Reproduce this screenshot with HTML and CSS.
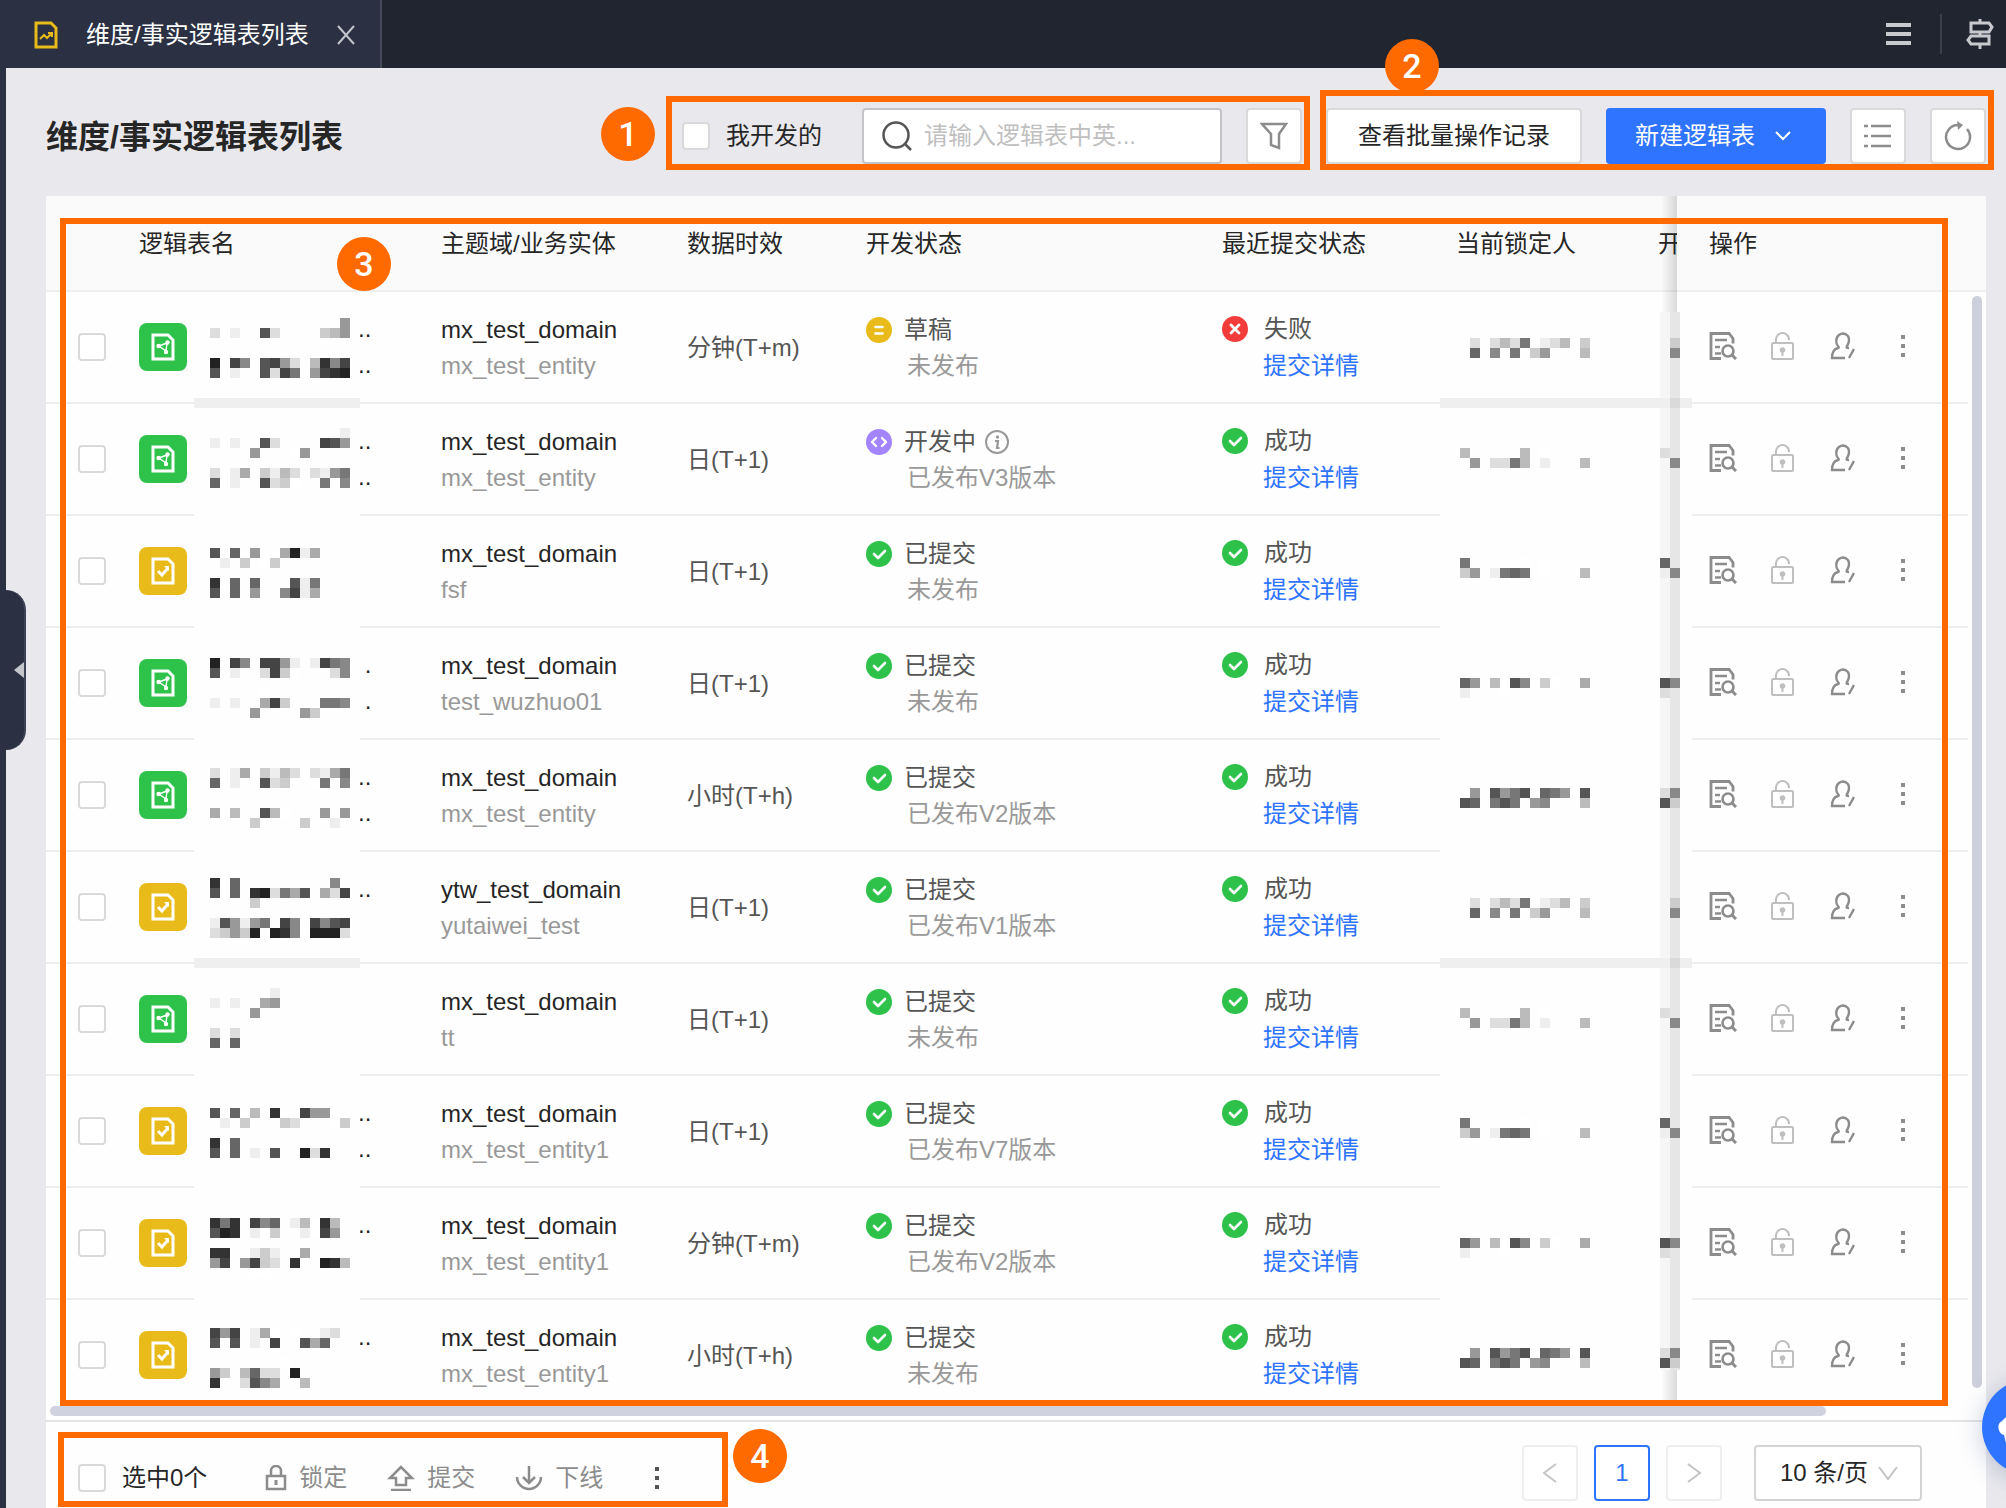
FILE: index.html
```
<!DOCTYPE html>
<html lang="zh-CN">
<head>
  <meta charset="UTF-8" />
  <title>维度/事实逻辑表列表</title>
  <link rel="stylesheet" href="styles.css">
</head>
<body>
  <!-- shared icons -->
  <svg class="sprite" aria-hidden="true">
    <symbol id="i-graph" viewBox="0 0 24 28">
      <path d="M2 2h15l5 5v19H2z" fill="none" stroke="currentColor" stroke-width="3" />
      <path d="M8 13l8-3-1 8z" fill="none" stroke="currentColor" stroke-width="1.500" />
      <circle cx="7.500" cy="13" r="2.200" fill="currentColor" /><circle cx="16.500" cy="9.500" r="2.200" fill="currentColor" /><circle cx="15" cy="19" r="2.200" fill="currentColor" />
    </symbol>
    <symbol id="i-chart" viewBox="0 0 24 28">
      <path d="M2 2h15l5 5v19H2z" fill="none" stroke="currentColor" stroke-width="3" />
      <path d="M7 14l4 4 6-7" fill="none" stroke="currentColor" stroke-width="3" />
      <path d="M13 9h5v5z" fill="currentColor" />
    </symbol>
    <symbol id="i-ok" viewBox="0 0 26 26">
      <circle cx="13" cy="13" r="13" fill="#2fc24b" />
      <path d="M8 13l4 4 7-7" fill="none" stroke="#fff" stroke-width="2.6" stroke-linecap="round" stroke-linejoin="round" />
    </symbol>
    <symbol id="i-fail" viewBox="0 0 26 26">
      <circle cx="13" cy="13" r="13" fill="#f23c3c" />
      <path d="M9 9l8 8M17 9l-8 8" stroke="#fff" stroke-width="2.8" stroke-linecap="round" />
    </symbol>
    <symbol id="i-draft" viewBox="0 0 26 26">
      <circle cx="13" cy="13" r="13" fill="#e8bb1a" />
      <path d="M9.500 10h7M9.500 16.500h7" stroke="#fff" stroke-width="2.6" stroke-linecap="round" />
    </symbol>
    <symbol id="i-dev" viewBox="0 0 26 26">
      <circle cx="13" cy="13" r="13" fill="#a285ff" />
      <path d="M10 9l-4 4 4 4M16 9l4 4-4 4" fill="none" stroke="#fff" stroke-width="2.4" stroke-linecap="round" stroke-linejoin="round" />
    </symbol>
    <symbol id="i-info" viewBox="0 0 26 26">
      <circle cx="13" cy="13" r="11" fill="none" stroke="currentColor" stroke-width="2" />
      <circle cx="13.500" cy="8" r="1.700" fill="currentColor" />
      <path d="M11 12h3l-1 7h2.500" fill="none" stroke="currentColor" stroke-width="2.200" />
    </symbol>
    <symbol id="i-detail" viewBox="0 0 28 28">
      <path d="M12 26.500H2v-25h18l4 5v5" fill="none" stroke="currentColor" stroke-width="2.800" />
      <path d="M6 8h12M6 15h5M6 21.500h6" stroke="currentColor" stroke-width="2.600" />
      <circle cx="19" cy="19" r="5.500" fill="none" stroke="currentColor" stroke-width="2.600" />
      <path d="M23 23l4 4" stroke="currentColor" stroke-width="3" />
    </symbol>
    <symbol id="i-unlock" viewBox="0 0 28 30">
      <rect x="3" y="12" width="21" height="16" rx="1" fill="none" stroke="currentColor" stroke-width="2" />
      <path d="M7 12V8a6.500 6.500 0 0 1 13 1" fill="none" stroke="currentColor" stroke-width="2" />
      <circle cx="13.500" cy="19" r="2.800" fill="currentColor" /><path d="M13.500 19v6" stroke="currentColor" stroke-width="2" />
    </symbol>
    <symbol id="i-user" viewBox="0 0 28 28">
      <path d="M16 26H3c0-5 2-9 6-10 1 0 1-1 0-2-2-2-3-8 1-11s10-1 10 5c0 3-1 4-2 6s0 2 2 2" fill="none" stroke="currentColor" stroke-width="2.400" />
      <path d="M25 17l-5 9" stroke="currentColor" stroke-width="2.400" />
    </symbol>
    <symbol id="i-more" viewBox="0 0 28 28">
      <path d="M12 3h4v4h-4zM12 12h4v4h-4zM12 21h4v4h-4z" fill="currentColor" />
    </symbol>
  </svg>

  <header class="topbar">
    <div class="tab">
      <svg class="tab-icon" viewBox="0 0 24 28">
        <path d="M2 2h15l5 5v19H2z" fill="none" stroke="#e8bb1a" stroke-width="3" />
        <path d="M6 18l4-4 3 3 5-5M14 12h4v4" fill="none" stroke="#e8bb1a" stroke-width="2" />
      </svg>
      <span>维度/事实逻辑表列表</span>
      <button class="tab-close" aria-label="关闭">
        <svg width="18" height="20" viewBox="0 0 18 20"><path d="M1 1l16 18M17 1L1 19" stroke="#c4c6cc" stroke-width="2" /></svg>
      </button>
    </div>
    <div class="topbar-tools">
      <button aria-label="菜单">
        <svg width="26" height="22" viewBox="0 0 26 22"><path d="M0 2h25M0 11h25M0 20h25" stroke="#c8c9cd" stroke-width="4" /></svg>
      </button>
      <span class="divider"></span>
      <button aria-label="导航">
        <svg width="28" height="30" viewBox="0 0 28 30"><path d="M14 0v4M5 4h18l3 4-3 5H5zM14 13v4M23 17H5l-3 4 3 4h18zM14 25v5" fill="none" stroke="#c8c9cd" stroke-width="3" /></svg>
      </button>
    </div>
  </header>

  <main>
    <button class="side-handle" aria-label="展开侧栏"></button>

    <div class="toolbar">
      <h1>维度/事实逻辑表列表</h1>

      <div class="filters">
        <label class="mine"><input type="checkbox" /> 我开发的</label>
        <label class="search">
          <svg width="30" height="32" viewBox="0 0 30 32"><circle cx="14" cy="15" r="12.500" fill="none" stroke="#555" stroke-width="2.500" /><path d="M23 24l6 6" stroke="#555" stroke-width="2.500" /></svg>
          <input type="text" placeholder="请输入逻辑表中英..." aria-label="搜索逻辑表" />
        </label>
        <button class="btn icon-btn" aria-label="筛选">
          <svg width="28" height="28" viewBox="0 0 28 28"><path d="M2 2h24l-7 10v14l-8-3V12z" fill="none" stroke="#8c8c8c" stroke-width="2.500" /></svg>
        </button>
        <div class="mark mark-filter"><span class="badge">1</span></div>
      </div>

      <div class="actions">
        <button class="btn">查看批量操作记录</button>
        <button class="btn primary">新建逻辑表
          <svg width="16" height="10" viewBox="0 0 16 10"><path d="M1 1l7 7 7-7" fill="none" stroke="#fff" stroke-width="2" /></svg>
        </button>
        <button class="btn icon-btn" aria-label="列表">
          <svg width="28" height="24" viewBox="0 0 28 24"><path d="M7 2h20M7 12h20M7 22h20M0 2h4M0 12h4M0 22h4" stroke="#8c8c8c" stroke-width="2.500" /></svg>
        </button>
        <button class="btn icon-btn" aria-label="刷新">
          <svg width="28" height="30" viewBox="0 0 28 30"><path d="M23 8a12 12 0 1 1-9-4h2" fill="none" stroke="#8c8c8c" stroke-width="2.500" /><path d="M13 0l6 4-5 5z" fill="#8c8c8c" /></svg>
        </button>
        <div class="mark mark-actions"><span class="badge">2</span></div>
      </div>
    </div>

    <section class="panel">
      <div class="table-wrap">
        <table>
          <colgroup>
            <col class="c-check"><col class="c-name"><col class="c-domain"><col class="c-time"><col>
            <col class="c-submit"><col class="c-locker"><col class="c-owner"><col class="c-ops">
          </colgroup>
          <thead>
            <tr>
              <th></th><th>逻辑表名</th><th>主题域/业务实体</th><th>数据时效</th><th>开发状态</th>
              <th>最近提交状态</th><th>当前锁定人</th><th class="clip">开</th><th class="ops">操作</th>
            </tr>
          </thead>
          <tbody id="rows"></tbody>
        </table>
        <div class="gutter"><div class="gutter-head"></div><div class="v-bar"></div></div>
        <div class="mark mark-table"><span class="badge">3</span></div>
      </div>
      <div class="h-track"><div class="h-bar"></div></div>

      <footer>
        <div class="bulk">
          <label class="picked"><input type="checkbox" /> 选中0个</label>
          <button><svg width="22" height="26" viewBox="0 0 22 26"><path d="M2 11h18v13H2zM6 11V6a5 5 0 0 1 10 0v5" fill="none" stroke="currentColor" stroke-width="2.500" /><path d="M11 15v5" stroke="currentColor" stroke-width="3" /></svg>锁定</button>
          <button><svg width="28" height="26" viewBox="0 0 28 26"><path d="M14 2L3 13h6v7h10v-7h6zM4 25h20" fill="none" stroke="currentColor" stroke-width="2.500" /></svg>提交</button>
          <button><svg width="28" height="26" viewBox="0 0 28 26"><path d="M14 1v16M8 12l6 6 6-6" fill="none" stroke="currentColor" stroke-width="2.500" /><path d="M2 12a12 12 0 0 0 24 0" fill="none" stroke="currentColor" stroke-width="2.500" /></svg>下线</button>
          <button class="bulk-more" aria-label="更多"><svg width="28" height="28"><use href="#i-more" /></svg></button>
          <div class="mark mark-bulk"><span class="badge">4</span></div>
        </div>
        <nav class="pager">
          <button disabled aria-label="上一页"><svg width="14" height="20" viewBox="0 0 14 20"><path d="M13 1L1 10l12 9" fill="none" stroke="#c4c4c4" stroke-width="2" /></svg></button>
          <button class="current">1</button>
          <button disabled aria-label="下一页"><svg width="14" height="20" viewBox="0 0 14 20"><path d="M1 1l12 9-12 9" fill="none" stroke="#c4c4c4" stroke-width="2" /></svg></button>
          <div class="page-size">
            <select aria-label="每页条数"><option>10 条/页</option></select>
            <svg width="20" height="14" viewBox="0 0 20 14"><path d="M1 1l9 12 9-12" fill="none" stroke="#c4c4c4" stroke-width="2" /></svg>
          </div>
        </nav>
      </footer>
    </section>
  </main>

  <button class="assistant" aria-label="助手">
    <svg width="96" height="96" viewBox="0 0 96 96"><path d="M24 64l-2-8c-6-1-8-12-2-14l4-4c4-12 14-18 26-18v44z" fill="#fff" /></svg>
  </button>

  <script>
    // masks are "top|line/line/...", each hex digit is one 10px grey cell
    const rows = [
      { type: "graph", domain: "mx_test_domain", entity: "mx_test_entity", time: "分钟(T+m)", dev: ["draft", "草稿", "未发布"], fail: true, dots: 2,
        mask: "26|.............9/d.e..5d....cb9///2.48.549d.b384/5.e..5d47.9432" },
      { type: "graph", domain: "mx_test_domain", entity: "mx_test_entity", time: "日(T+1)", dev: ["dev", "开发中", "已发布V3版本"], dots: 2,
        mask: "24|.............e/e.e..5d....459/....9...f9//d.ea.cebd.de97/6.e..5dcf..7.8" },
      { type: "chart", domain: "mx_test_domain", entity: "fsf", time: "日(T+1)", dev: ["ok", "已提交", "未发布"], dots: 0,
        mask: "32|5.6.9..a2ea/.e.c.fc//3.6.6...5e7/5.6.9..84ea" },
      { type: "graph", domain: "mx_test_domain", entity: "test_wuzhuo01", time: "日(T+1)", dev: ["ok", "已提交", "未发布"], dots: 2, single: true,
        mask: "30|2.48.449e.e478/5.e..d4cf...d8//.....f/e.e..a4c...778/....9....9c" },
      { type: "graph", domain: "mx_test_domain", entity: "mx_test_entity", time: "小时(T+h)", dev: ["ok", "已提交", "已发布V2版本"], dots: 2,
        mask: "28|d.ea.cebd.dea7/6.e..5dcf.f7.8///a.b..5bf...9.9/....c....c..e" },
      { type: "chart", domain: "ytw_test_domain", entity: "yutaiwei_test", time: "日(T+1)", dev: ["ok", "已提交", "已发布V1版本"], dots: 1,
        mask: "26|3.6.........8/5.6.32d7a5.ad4/....c//e59e97.48.4854/dc9c2f238.222d" },
      { type: "graph", domain: "mx_test_domain", entity: "tt", time: "日(T+1)", dev: ["ok", "已提交", "未发布"], dots: 0,
        mask: "24|.....fe/e.e..a9/....9//d.d/6.6" },
      { type: "chart", domain: "mx_test_domain", entity: "mx_test_entity1", time: "日(T+1)", dev: ["ok", "已提交", "已发布V7版本"], dots: 2,
        mask: "32|5.6.b.3..499/.e.c...cd...fc//3.6/5.6.e.5..2d3" },
      { type: "chart", domain: "mx_test_domain", entity: "mx_test_entity1", time: "分钟(T+m)", dev: ["ok", "已提交", "已发布V2版本"], dots: 1,
        mask: "30|373.486.ebf3b/523.e.c..ef49//33..ece..a/94.94cd.3..23b/....ff" },
      { type: "chart", domain: "mx_test_domain", entity: "mx_test_entity1", time: "小时(T+h)", dev: ["ok", "已提交", "未发布"], dots: 1,
        mask: "28|494.eaf.f..ed/5.5.e.4..5a6//.......f/9c.b6dd.2/3..d58a..b" }
    ];

    // locker column, repeats every five rows
    const lockers = [
      "46|.d.dbd7.edb.c........c/.6.8f7.c9...b........8",
      "44|b.....b.f...........d/.9.dd7b.e...b........8",
      "42|7.....f.f...........6/c9.e767.f...b.......e8",
      "50|69.b.58.cf..a.......58/e...f...............d",
      "48|.9.5975.679.5.......d8/56.757.98...b.......5c"
    ];

    function cells(mask, x0) {
      const [top, body] = mask.split("|");
      let out = "";
      body.split("/").forEach((line, r) => {
        [...line].forEach((c, i) => {
          if (c !== ".") out += `<rect x="${x0 + i * 10}" y="${+top + r * 10}" width="10" height="10" fill="#${c.repeat(3)}" />`;
        });
      });
      return out;
    }

    function nameMask(row, n) {
      const bar = n % 5 === 0 ? '<rect y="106" width="166" height="10" fill="#efefef" />' : "";
      return `<svg class="mask" width="166" height="120" viewBox="0 0 166 120">
        <rect y="6" width="166" height="112" fill="#fefefe" />${bar}${cells(row.mask, 16)}</svg>`;
    }

    function lockMask(n) {
      const from = n === 0 ? 20 : 6;
      const h = (n === 9 ? 70 : 118) - from;
      const bar = n % 5 === 0 ? '<rect y="106" width="252" height="10" fill="#efefef" /><rect x="230" y="106" width="10" height="10" fill="#dadada" />' : "";
      return `<svg class="mask mask-lock" width="252" height="120" viewBox="0 0 252 120">
        <rect y="${from}" width="252" height="${h}" fill="#fefefe" />
        <rect x="220" y="${from}" width="10" height="${h}" fill="#f6f6f6" />
        <rect x="230" y="${from}" width="10" height="${h}" fill="#e6e6e6" />${bar}${cells(lockers[n % 5], 20)}</svg>`;
    }

    const icon = (id, w = 28, h = 28) => `<svg class="${id}" width="${w}" height="${h}"><use href="#i-${id}" /></svg>`;

    document.getElementById("rows").innerHTML = rows.map((row, n) => {
      const dot = row.single ? "&nbsp;." : "..";
      return `
      <tr>
        <td class="check"><input type="checkbox" aria-label="选择第${n + 1}行" /></td>
        <td class="name">
          <div class="name-box">
            <span class="type type-${row.type}">${icon(row.type, 24, 28)}</span>
            <div class="dots"><div>${row.dots > 0 ? dot : ""}</div><div>${row.dots > 1 ? dot : ""}</div></div>
          </div>
          ${nameMask(row, n)}
        </td>
        <td class="text"><div class="domain">${row.domain}</div><div class="entity">${row.entity}</div></td>
        <td class="text time">${row.time}</td>
        <td class="text">
          <div class="state">${icon(row.dev[0], 26, 26)}${row.dev[1]}${row.dev[0] === "dev" ? icon("info", 26, 26) : ""}</div>
          <div class="version">${row.dev[2]}</div>
        </td>
        <td class="text submit">
          <div class="state">${icon(row.fail ? "fail" : "ok", 26, 26)}${row.fail ? "失败" : "成功"}</div>
          <a href="#">提交详情</a>
        </td>
        <td class="locker">${lockMask(n)}</td>
        <td></td>
        <td class="ops">
          <div class="ops-box">
            <button aria-label="详情">${icon("detail")}</button>
            <button class="off" aria-label="锁定">${icon("unlock", 28, 30)}</button>
            <button aria-label="转交">${icon("user")}</button>
            <button aria-label="更多">${icon("more")}</button>
          </div>
        </td>
      </tr>`;
    }).join("");
  </script>
</body>
</html>
```
FILE: styles.css
```
* {
  box-sizing: border-box;
}

body {
  margin: 0;
  font-family: "Liberation Sans", "Noto Sans CJK SC", sans-serif;
  font-size: 24px;
  line-height: 36px;
  color: #262626;
  background: #e9e9ed;
}

button, input, select {
  font: inherit;
  color: inherit;
}

button {
  padding: 0;
  border: none;
  background: none;
  cursor: pointer;
}

svg {
  display: block;
  flex: none;
}

.sprite {
  position: absolute;
  width: 0;
  height: 0;
}

input[type="checkbox"] {
  appearance: none;
  display: block;
  flex: none;
  width: 28px;
  height: 28px;
  margin: 0;
  border: 2px solid #d9d9d9;
  border-radius: 4px;
  background: #fff;
}

/* top bar */
.topbar {
  display: flex;
  justify-content: space-between;
  height: 68px;
  background: #202530;
}

.tab {
  display: flex;
  align-items: center;
  width: 382px;
  padding-top: 2px;
  padding-left: 34px;
  border-right: 2px solid #444a5c;
  background: #2b3042;
  color: #fff;
}

.tab-icon {
  width: 24px;
  height: 28px;
  margin-right: 28px;
}

.tab-close {
  margin-left: 28px;
}

.topbar-tools {
  display: flex;
  align-items: center;
  gap: 28px;
  padding-right: 12px;
}

.divider {
  width: 2px;
  height: 40px;
  margin-right: -4px;
  background: #3a3f4b;
}

/* page */
main {
  position: relative;
  padding: 0 20px 0 40px;
  border-left: 6px solid #2b3042;
}

.side-handle {
  position: absolute;
  left: 0;
  top: 522px;
  width: 20px;
  height: 160px;
  border-right: 2px solid #3d4355;
  border-radius: 0 20px 20px 0;
  background: #2b3042;
}

.side-handle::after {
  content: "";
  position: absolute;
  right: 0;
  top: 72px;
  border: 8px solid transparent;
  border-left: none;
  border-right: 10px solid #c4c6cc;
}

.toolbar {
  display: flex;
  gap: 24px;
  height: 128px;
  padding-top: 40px;
}

h1 {
  margin: 0 auto 0 0;
  font-size: 32px;
  line-height: 58px;
  font-weight: 700;
}

.filters, .actions {
  position: relative;
  display: flex;
  gap: 24px;
  height: 56px;
}

.mine {
  display: flex;
  align-items: center;
  gap: 16px;
  margin-right: 16px;
}

.search {
  display: flex;
  align-items: center;
  gap: 12px;
  width: 360px;
  padding-left: 18px;
  border: 2px solid #c4c4c8;
  border-radius: 4px;
  background: #fff;
}

.search input {
  flex: 1;
  min-width: 0;
  padding: 0;
  border: none;
  outline: none;
  background: none;
}

.search input::placeholder {
  color: #bfbfbf;
}

.btn {
  display: flex;
  align-items: center;
  justify-content: center;
  padding: 0 30px;
  border: 2px solid #d9d9d9;
  border-radius: 4px;
  background: #fff;
  white-space: nowrap;
}

.primary {
  gap: 20px;
  width: 220px;
  padding: 0 34px 0 28px;
  border-color: #2e74ff;
  background: #2e74ff;
  color: #fff;
}

.icon-btn {
  width: 56px;
  padding: 0;
}

/* numbered marks */
.mark {
  position: absolute;
  z-index: 5;
  border: 6px solid #ff6a00;
  pointer-events: none;
}

.badge {
  position: absolute;
  width: 54px;
  height: 54px;
  border-radius: 50%;
  background: #ff6a00;
  color: #fff;
  font: 500 34px/54px Roboto, sans-serif;
  text-align: center;
}

.mark-filter {
  inset: -12px -8px -6px -16px;
}

.mark-filter .badge {
  left: -71px;
  top: 5px;
}

.mark-actions {
  inset: -18px -8px -6px -6px;
}

.mark-actions .badge {
  left: 59px;
  top: -57px;
}

.mark-table {
  inset: 22px 38px 0 14px;
}

.mark-table .badge {
  left: 271px;
  top: 13px;
}

.mark-bulk {
  inset: 10px auto 1px 12px;
  width: 670px;
}

.mark-bulk .badge {
  left: 669px;
  top: -9px;
}

/* table */
.panel {
  background: #fefefe;
}

.table-wrap {
  position: relative;
  display: flex;
  overflow: hidden;
}

table {
  flex: 1;
  width: 0;
  margin-bottom: -6px;
  table-layout: fixed;
  border-spacing: 0;
}

.c-check { width: 93px; }
.c-name { width: 302px; }
.c-domain { width: 246px; }
.c-time { width: 179px; }
.c-submit { width: 234px; }
.c-locker { width: 202px; }
.c-owner { width: 19px; }
.c-ops { width: 291px; }

th {
  height: 96px;
  padding: 2px 0 0;
  border-bottom: 2px solid #eee;
  background: #fafafa;
  font-weight: 400;
  text-align: left;
  white-space: nowrap;
}

.clip {
  overflow: hidden;
}

td {
  position: relative;
  height: 112px;
  padding: 0;
  border-bottom: 2px solid #eee;
  white-space: nowrap;
}

.text {
  padding-top: 2px;
}

.check {
  padding-left: 32px;
}

.ops {
  position: relative;
  padding-left: 32px;
}

/* shadow of the fixed column */
.ops::before {
  content: "";
  position: absolute;
  left: -16px;
  top: 0;
  bottom: -2px;
  width: 16px;
  background: linear-gradient(to right, rgba(0, 0, 0, 0), rgba(0, 0, 0, 0.14));
}

.name-box {
  display: flex;
  align-items: center;
  justify-content: space-between;
  padding-right: 70px;
}

.type {
  display: flex;
  align-items: center;
  justify-content: center;
  width: 48px;
  height: 48px;
  border-radius: 8px;
  color: #fff;
}

.type-graph {
  background: #2fc24b;
}

.type-chart {
  background: #e8bb1a;
}

.dots {
  width: 13px;
  height: 72px;
}

.dots div {
  height: 36px;
}

.mask {
  position: absolute;
  left: 55px;
  top: 0;
  z-index: 1;
  shape-rendering: crispEdges;
  pointer-events: none;
}

.mask-lock {
  left: -16px;
  z-index: 2;
}

.entity, .version {
  color: #999;
}

.time, .state {
  color: #555;
}

.state {
  display: flex;
  align-items: center;
  gap: 12px;
}

.state .info {
  margin-left: -4px;
  color: #999;
}

.version {
  padding-left: 41px;
}

.submit .state {
  gap: 16px;
}

.submit a {
  display: block;
  margin-left: 41px;
  line-height: 38px;
  color: #2e74ff;
  text-decoration: none;
}

.ops-box {
  display: flex;
  align-items: center;
  gap: 32px;
  padding-bottom: 2px;
  color: #8c8c8c;
}

.off {
  color: #bfbfbf;
}

.gutter {
  width: 18px;
}

.gutter-head {
  height: 96px;
  border-bottom: 2px solid #eee;
  background: #fafafa;
}

.v-bar {
  width: 10px;
  height: calc(100% - 118px);
  margin: 4px;
  border-radius: 5px;
  background: #cdcfdd;
}

.h-track {
  height: 16px;
  padding: 0 160px 0 4px;
  border-bottom: 2px solid #e4e4e4;
}

.h-bar {
  height: 10px;
  border-radius: 5px;
  background: #d0d2df;
}

/* footer */
footer {
  position: relative;
  display: flex;
  justify-content: space-between;
  height: 86px;
  padding: 0 64px 0 32px;
}

.bulk {
  display: flex;
  align-items: center;
  height: 56px;
  margin-top: 28px;
  color: #8c8c8c;
}

.bulk button {
  display: flex;
  align-items: center;
  gap: 12px;
  margin-right: 40px;
}

.bulk .bulk-more {
  color: #555;
}

.picked {
  display: flex;
  align-items: center;
  gap: 16px;
  margin-right: 58px;
  color: #262626;
}

.pager {
  display: flex;
  gap: 16px;
  height: 56px;
  margin-top: 23px;
}

.pager button {
  display: flex;
  align-items: center;
  justify-content: center;
  width: 56px;
  border: 2px solid #eee;
  border-radius: 4px;
  background: #fff;
}

.pager .current {
  border-color: #2e74ff;
  color: #2e74ff;
}

.page-size {
  position: relative;
  margin-left: 16px;
}

.page-size select {
  appearance: none;
  width: 168px;
  height: 56px;
  padding: 0 0 0 24px;
  border: 2px solid #d4d4d4;
  border-radius: 4px;
  background: #fff;
}

.page-size svg {
  position: absolute;
  right: 24px;
  top: 21px;
  pointer-events: none;
}

/* floating helper at the window edge */
.assistant {
  position: fixed;
  right: -72px;
  bottom: 33px;
  z-index: 6;
  width: 96px;
  height: 96px;
  border-radius: 50%;
  background: #2e74ff;
  box-shadow: 0 4px 24px rgba(40, 60, 120, 0.25);
}
```
